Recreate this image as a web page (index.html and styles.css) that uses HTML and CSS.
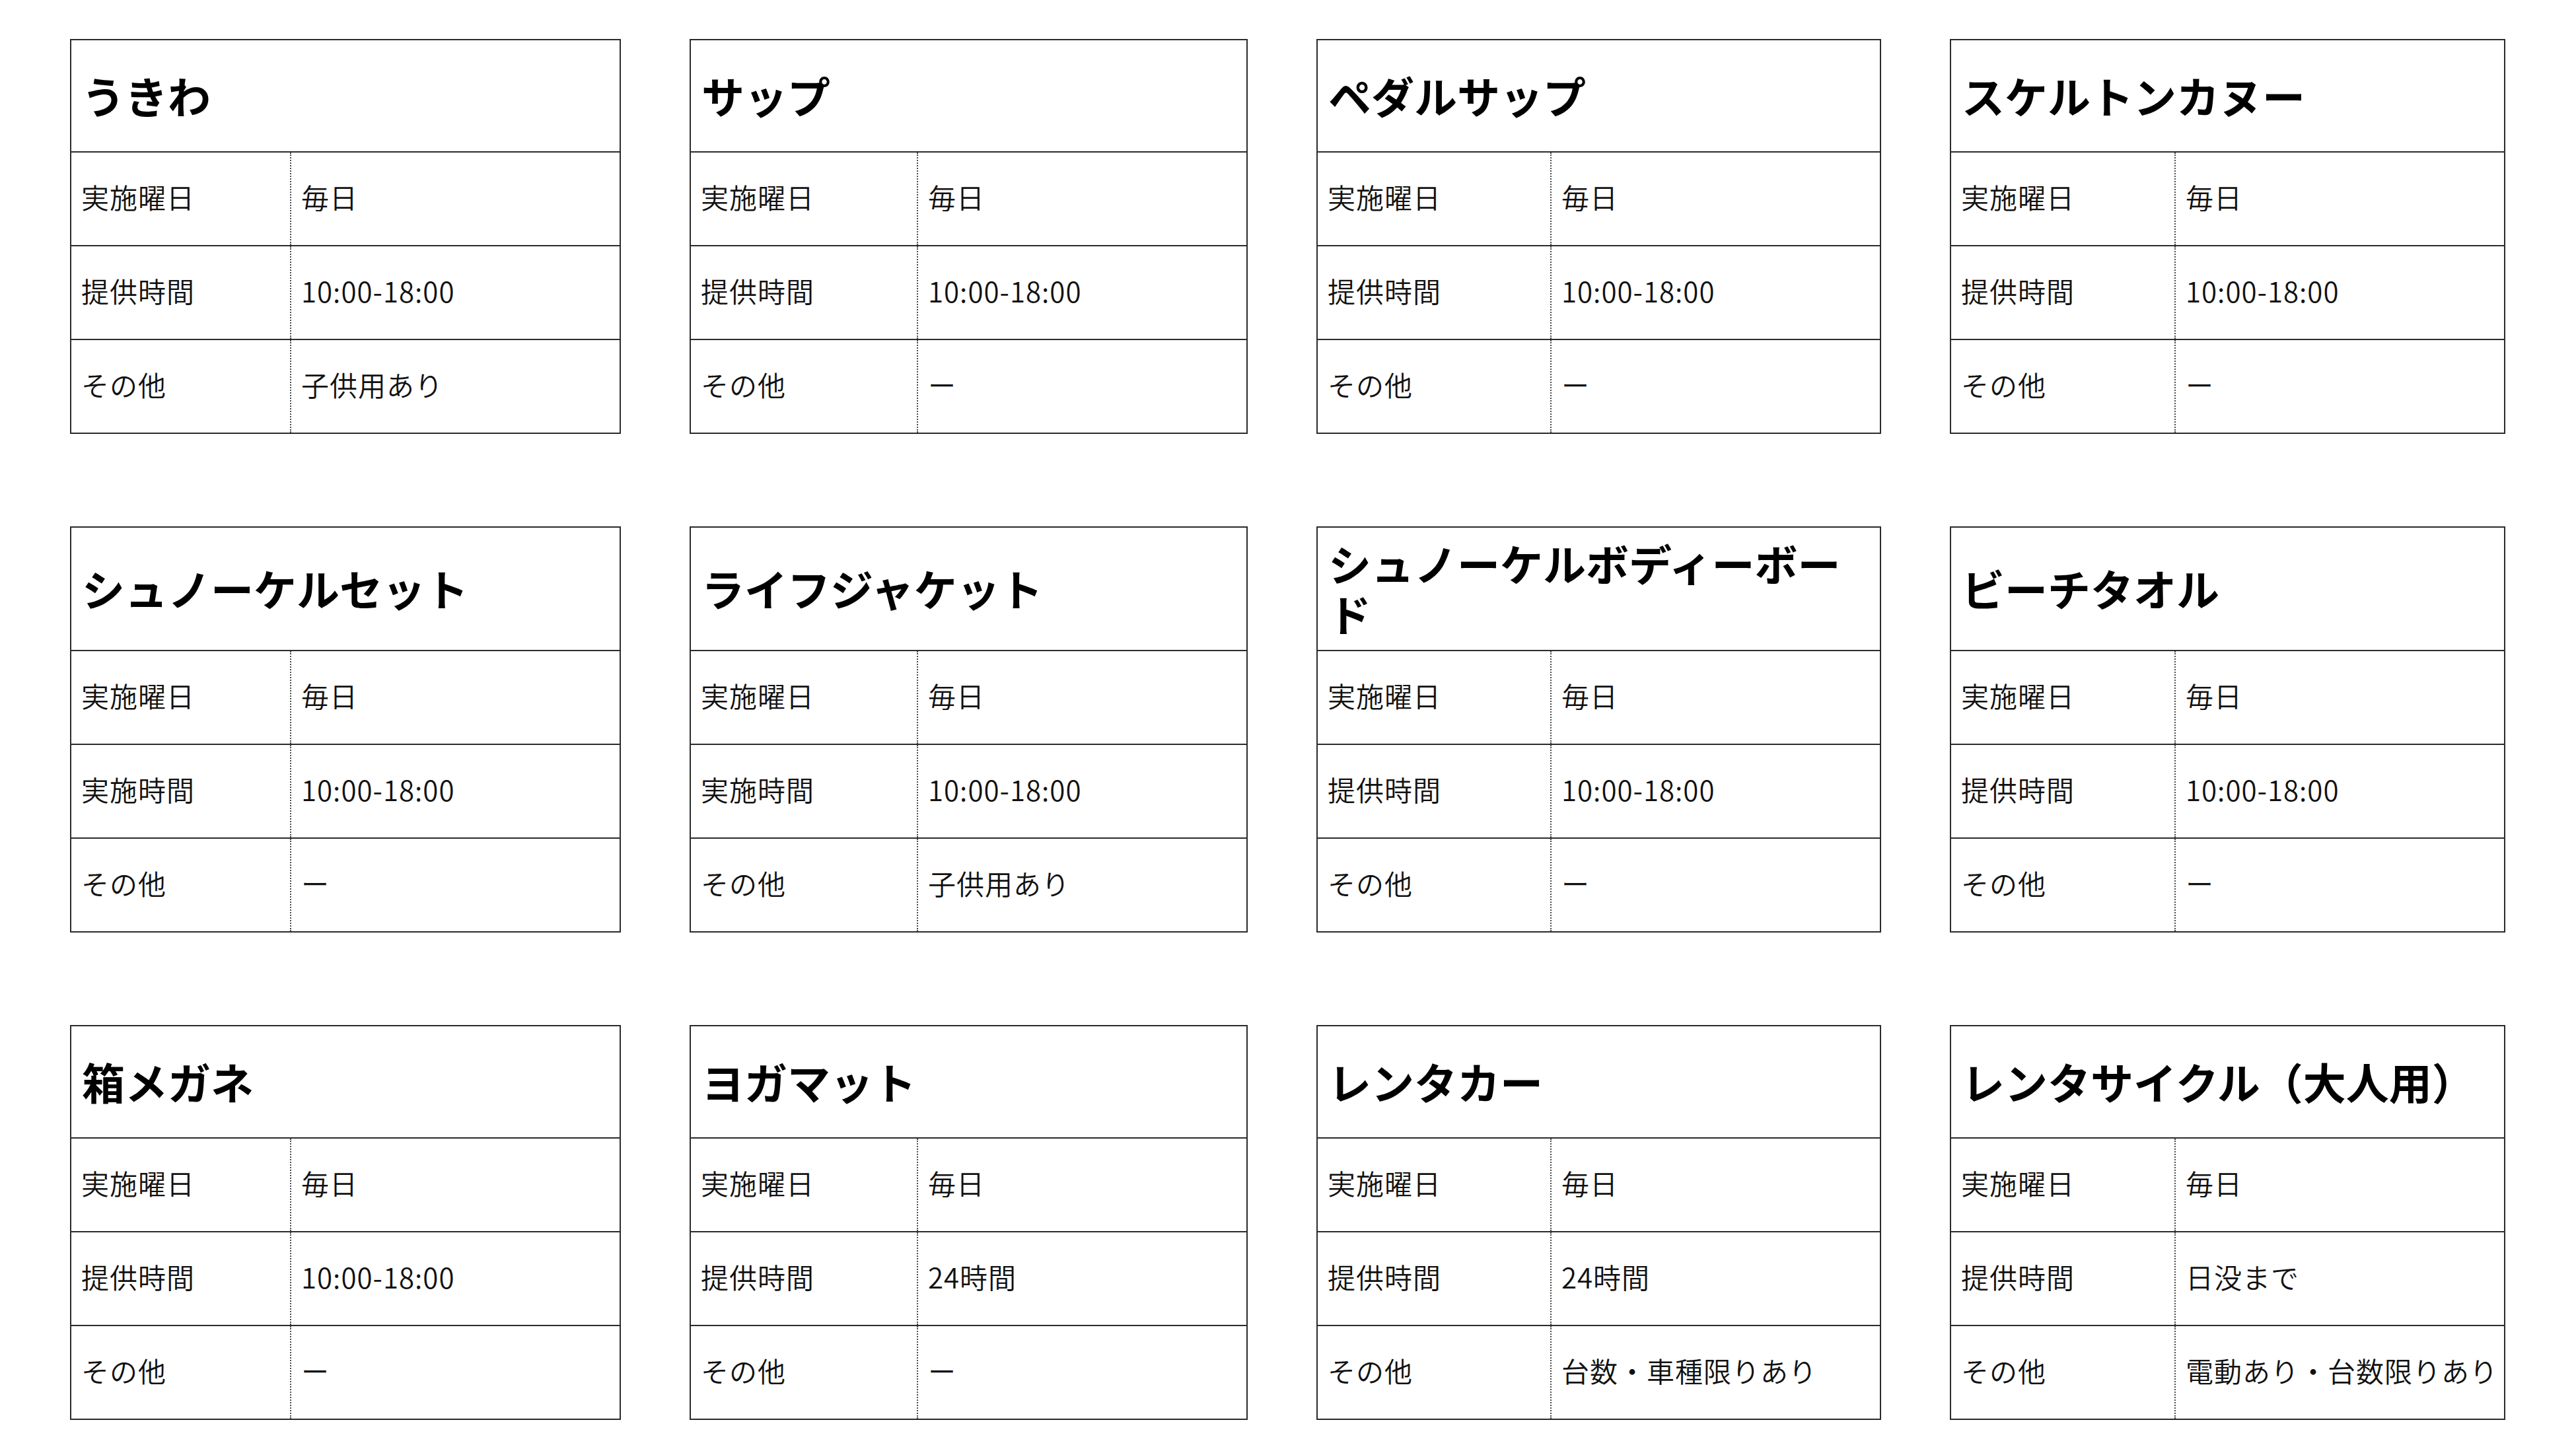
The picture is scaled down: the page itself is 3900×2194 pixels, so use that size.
FILE: index.html
```html
<!DOCTYPE html>
<html lang="ja">
<head>
<meta charset="utf-8">
<title>レンタル一覧</title>
<link rel="stylesheet" href="styles.css">
</head>
<body>
<main class="grid">
  <section class="card">
    <h2 class="card-title">うきわ</h2>
    <dl class="rows">
      <div class="row"><dt>実施曜日</dt><dd>毎日</dd></div>
      <div class="row"><dt>提供時間</dt><dd>10:00-18:00</dd></div>
      <div class="row"><dt>その他</dt><dd>子供用あり</dd></div>
    </dl>
  </section>
  <section class="card">
    <h2 class="card-title">サップ</h2>
    <dl class="rows">
      <div class="row"><dt>実施曜日</dt><dd>毎日</dd></div>
      <div class="row"><dt>提供時間</dt><dd>10:00-18:00</dd></div>
      <div class="row"><dt>その他</dt><dd>ー</dd></div>
    </dl>
  </section>
  <section class="card">
    <h2 class="card-title">ペダルサップ</h2>
    <dl class="rows">
      <div class="row"><dt>実施曜日</dt><dd>毎日</dd></div>
      <div class="row"><dt>提供時間</dt><dd>10:00-18:00</dd></div>
      <div class="row"><dt>その他</dt><dd>ー</dd></div>
    </dl>
  </section>
  <section class="card">
    <h2 class="card-title">スケルトンカヌー</h2>
    <dl class="rows">
      <div class="row"><dt>実施曜日</dt><dd>毎日</dd></div>
      <div class="row"><dt>提供時間</dt><dd>10:00-18:00</dd></div>
      <div class="row"><dt>その他</dt><dd>ー</dd></div>
    </dl>
  </section>

  <section class="card">
    <h2 class="card-title">シュノーケルセット</h2>
    <dl class="rows">
      <div class="row"><dt>実施曜日</dt><dd>毎日</dd></div>
      <div class="row"><dt>実施時間</dt><dd>10:00-18:00</dd></div>
      <div class="row"><dt>その他</dt><dd>ー</dd></div>
    </dl>
  </section>
  <section class="card">
    <h2 class="card-title">ライフジャケット</h2>
    <dl class="rows">
      <div class="row"><dt>実施曜日</dt><dd>毎日</dd></div>
      <div class="row"><dt>実施時間</dt><dd>10:00-18:00</dd></div>
      <div class="row"><dt>その他</dt><dd>子供用あり</dd></div>
    </dl>
  </section>
  <section class="card">
    <h2 class="card-title">シュノーケルボディーボード</h2>
    <dl class="rows">
      <div class="row"><dt>実施曜日</dt><dd>毎日</dd></div>
      <div class="row"><dt>提供時間</dt><dd>10:00-18:00</dd></div>
      <div class="row"><dt>その他</dt><dd>ー</dd></div>
    </dl>
  </section>
  <section class="card">
    <h2 class="card-title">ビーチタオル</h2>
    <dl class="rows">
      <div class="row"><dt>実施曜日</dt><dd>毎日</dd></div>
      <div class="row"><dt>提供時間</dt><dd>10:00-18:00</dd></div>
      <div class="row"><dt>その他</dt><dd>ー</dd></div>
    </dl>
  </section>

  <section class="card">
    <h2 class="card-title">箱メガネ</h2>
    <dl class="rows">
      <div class="row"><dt>実施曜日</dt><dd>毎日</dd></div>
      <div class="row"><dt>提供時間</dt><dd>10:00-18:00</dd></div>
      <div class="row"><dt>その他</dt><dd>ー</dd></div>
    </dl>
  </section>
  <section class="card">
    <h2 class="card-title">ヨガマット</h2>
    <dl class="rows">
      <div class="row"><dt>実施曜日</dt><dd>毎日</dd></div>
      <div class="row"><dt>提供時間</dt><dd>24時間</dd></div>
      <div class="row"><dt>その他</dt><dd>ー</dd></div>
    </dl>
  </section>
  <section class="card">
    <h2 class="card-title">レンタカー</h2>
    <dl class="rows">
      <div class="row"><dt>実施曜日</dt><dd>毎日</dd></div>
      <div class="row"><dt>提供時間</dt><dd>24時間</dd></div>
      <div class="row"><dt>その他</dt><dd>台数・車種限りあり</dd></div>
    </dl>
  </section>
  <section class="card">
    <h2 class="card-title">レンタサイクル（大人用）</h2>
    <dl class="rows">
      <div class="row"><dt>実施曜日</dt><dd>毎日</dd></div>
      <div class="row"><dt>提供時間</dt><dd>日没まで</dd></div>
      <div class="row"><dt>その他</dt><dd>電動あり・台数限りあり</dd></div>
    </dl>
  </section>
</main>
</body>
</html>
```

FILE: styles.css
```css
html, body {
  margin: 0;
  padding: 0;
  background: #ffffff;
}

body {
  font-family: "Noto Sans CJK JP", "Noto Sans", sans-serif;
  color: #111111;
}

.grid {
  display: grid;
  grid-template-columns: 834px 845px 855px 841px;
  column-gap: 104px;
  row-gap: 140px;
  padding: 59px 106px 47px;
}

.card {
  display: flex;
  flex-direction: column;
  border: 2px solid #2b2b2b;
  background: #ffffff;
}

.card-title {
  flex: 1 0 auto;
  display: flex;
  align-items: center;
  box-sizing: border-box;
  min-height: 170px;
  margin: 0;
  padding: 15px 16px 18px;
  font-size: 65px;
  font-weight: 700;
  line-height: 76px;
  color: #000000;
  border-bottom: 2px solid #2b2b2b;
}

.rows {
  margin: 0;
  padding: 0;
}

.row {
  display: flex;
  height: 140px;
  border-bottom: 2px solid #2b2b2b;
}

.row:last-child {
  border-bottom: 0;
}

.row dt,
.row dd {
  display: flex;
  align-items: center;
  box-sizing: border-box;
  margin: 0;
  padding: 0 0 6px 15px;
  font-size: 42px;
  line-height: 60px;
  font-weight: 350;
  letter-spacing: 1px;
  white-space: nowrap;
}

.row dt {
  flex: 1 1 auto;
}

.row dd {
  flex: 0 0 499px;
  border-left: 2px dotted #4a4a4a;
}
```
